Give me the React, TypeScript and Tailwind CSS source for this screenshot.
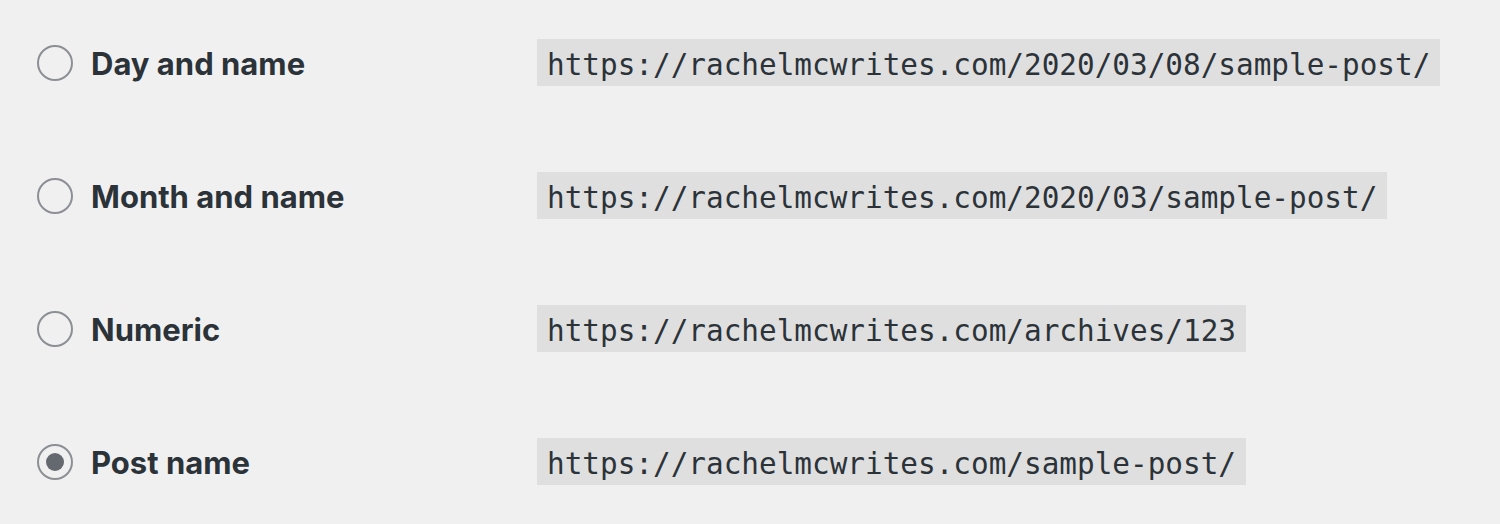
import React from "react"

const options = [
  { label: "Day and name", url: "https://rachelmcwrites.com/2020/03/08/sample-post/" },
  { label: "Month and name", url: "https://rachelmcwrites.com/2020/03/sample-post/" },
  { label: "Numeric", url: "https://rachelmcwrites.com/archives/123" },
  { label: "Post name", url: "https://rachelmcwrites.com/sample-post/", checked: true },
]

const Radio = ({ checked }: { checked?: boolean }) => (
  <span className="flex h-9 w-9 shrink-0 items-center justify-center rounded-full border-2 border-[#8c8f94]">
    {checked && <span className="h-[18px] w-[18px] rounded-full bg-[#646970]" />}
  </span>
)

export default function App() {
  return (
    <div className="min-h-[524px] w-[1500px] bg-[#f0f0f1] pl-[37px] pt-[39px]">
      <div className="flex flex-col gap-[86px]">
        {options.map((opt) => (
          <div key={opt.label} className="flex h-[47px] items-center">
            <label className="flex w-[500px] items-center gap-[18px]">
              <Radio checked={opt.checked} />
              <span className="mt-[3px] font-['Inter',sans-serif] text-[31px] font-bold text-[#2c3338]">
                {opt.label}
              </span>
            </label>
            <code className="bg-[#dfdfe0] px-[10px] pt-[6px] font-['DejaVu_Sans_Mono',monospace] text-[29.35px] leading-[41px] text-[#2c3338]">
              {opt.url}
            </code>
          </div>
        ))}
      </div>
    </div>
  )
}
